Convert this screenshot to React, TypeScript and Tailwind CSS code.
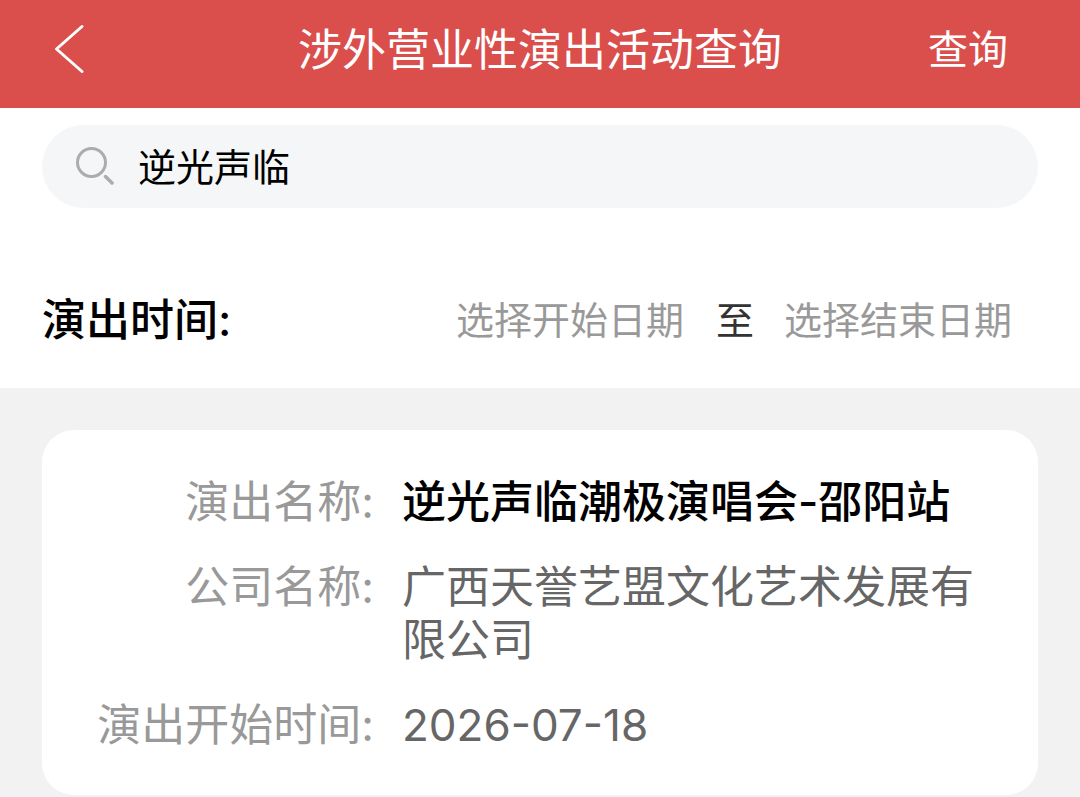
import React, { useState } from 'react';

interface Field {
  label: string;
  value: string;
  strong?: boolean;
}

const FIELDS: Field[] = [
  { label: '演出名称:', value: '逆光声临潮极演唱会-邵阳站', strong: true },
  { label: '公司名称:', value: '广西天誉艺盟文化艺术发展有限公司' },
  { label: '演出开始时间:', value: '2026-07-18' },
];

function App() {
  const [keyword, setKeyword] = useState('逆光声临');
  const [startDate, setStartDate] = useState('');
  const [endDate, setEndDate] = useState('');

  return (
    <div className="min-h-screen bg-[#f2f2f2] font-[Inter,'Noto_Sans_CJK_SC',sans-serif] text-black">

      {/* Title bar */}
      <header className="flex h-[108px] items-center bg-[#da4e4c] px-[52px] pb-2 text-white">
        <div className="flex flex-1 pr-5">
          <button type="button" aria-label="返回" className="flex">
            <svg className="h-[52px] w-9" viewBox="0 0 36 52" fill="none" stroke="currentColor" strokeWidth="3" strokeLinecap="round" strokeLinejoin="round">
              <path d="M30 2.500L4.500 25L30 47.500" />
            </svg>
          </button>
        </div>
        <h1 className="text-[44px] leading-[52px]">涉外营业性演出活动查询</h1>
        <div className="flex flex-1 justify-end pr-5">
          <button type="button" className="text-[40px] leading-[52px]">查询</button>
        </div>
      </header>

      {/* Search filters */}
      <section className="bg-white px-[42px] pt-[17px] pb-[42px]">
        <label className="flex h-[83px] items-center gap-6 rounded-full bg-[#f5f6f8] pl-8">
          <svg className="h-10 w-10 shrink-0" viewBox="0 0 40 40" fill="none" stroke="#acacac" strokeWidth="3">
            <circle cx="17.500" cy="15.500" r="14" />
            <path d="M31.500 29.500L38 36" strokeWidth="3.500" strokeLinecap="round" />
          </svg>
          <input
            type="text"
            aria-label="演出名称"
            value={keyword}
            onChange={(e) => setKeyword(e.target.value)}
            className="min-w-0 flex-1 bg-transparent pr-8 text-[38px] leading-[52px] outline-none"
          />
        </label>

        <div className="mt-[86px] flex items-center justify-between pr-6">
          <span className="text-[44px] leading-[52px] font-medium">演出时间:</span>
          <div className="flex items-center gap-[30px] text-[38px] leading-[52px]">
            <input
              type="text"
              aria-label="开始日期"
              placeholder="选择开始日期"
              value={startDate}
              onChange={(e) => setStartDate(e.target.value)}
              className="w-[230px] bg-transparent outline-none placeholder:text-[#999999]"
            />
            <span className="text-[#333333]">至</span>
            <input
              type="text"
              aria-label="结束日期"
              placeholder="选择结束日期"
              value={endDate}
              onChange={(e) => setEndDate(e.target.value)}
              className="w-[230px] bg-transparent outline-none placeholder:text-[#999999]"
            />
          </div>
        </div>
      </section>

      {/* Result card */}
      <main className="px-[42px] pt-[42px]">
        <dl className="flex flex-col gap-8 rounded-[32px] bg-white pt-[46px] pr-10 pb-[43px] text-[44px] leading-[53px]">
          {FIELDS.map((field) => (
            <div key={field.label} className="flex gap-7">
              <dt className="w-[332px] shrink-0 text-right text-[#999999]">{field.label}</dt>
              <dd className={field.strong ? 'flex-1 font-medium text-black' : 'flex-1 text-[#666666]'}>
                {field.value}
              </dd>
            </div>
          ))}
        </dl>
      </main>

    </div>
  );
}

export default App;
